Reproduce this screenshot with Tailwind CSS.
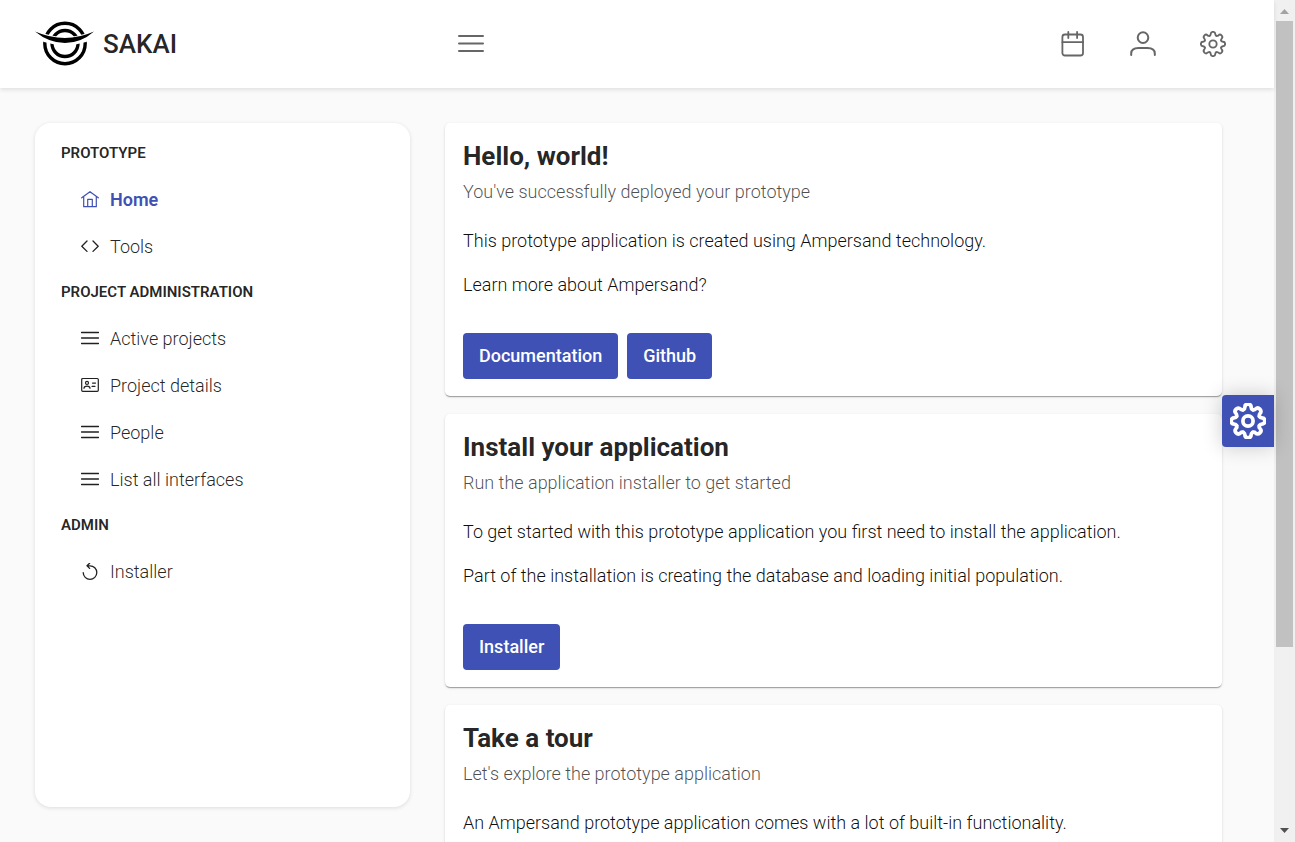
<!DOCTYPE html>
<html lang="en">
<head>
<meta charset="utf-8">
<meta name="viewport" content="width=device-width, initial-scale=1">
<title>Sakai</title>
<script src="https://cdn.jsdelivr.net/npm/@tailwindcss/browser@4"></script>
</head>
<body class="flex h-screen overflow-hidden bg-[#fafafa] font-['Roboto',sans-serif] text-lg text-black/87">
<svg class="hidden" aria-hidden="true">
  <symbol id="bars" viewBox="0 0 18 18"><path d="M.5 2.500h17M.5 8h17M.5 13.500h17" fill="none" stroke="currentColor" stroke-width="1.4" stroke-linecap="round"/></symbol>
  <path id="tooth" d="M-3.14-7.58C-2.2-8-2.1-8.6-2.1-9.2C-2.1-10.5-1.3-11.2 0-11.2C1.3-11.2 2.1-10.5 2.1-9.2C2.1-8.6 2.2-8 3.14-7.58"/>
  <symbol id="cog" viewBox="-12 -12 24 24">
    <g fill="none" stroke="currentColor" stroke-linecap="round">
      <use href="#tooth"/><use href="#tooth" transform="rotate(45)"/><use href="#tooth" transform="rotate(90)"/><use href="#tooth" transform="rotate(135)"/><use href="#tooth" transform="rotate(180)"/><use href="#tooth" transform="rotate(225)"/><use href="#tooth" transform="rotate(270)"/><use href="#tooth" transform="rotate(315)"/>
      <circle r="3.4"/>
    </g>
  </symbol>
</svg>

<div class="relative flex min-w-0 flex-1 flex-col">
  <header class="z-10 flex h-22 shrink-0 items-center bg-white px-[35px] shadow-[0_2px_4px_rgba(0,0,0,0.1)]">
    <a href="#" class="flex w-[410px] items-center gap-[9px] text-[26px] font-medium">
      <svg class="h-[46px] w-[59px]" viewBox="0 0 59 46" aria-hidden="true">
        <g fill="none" stroke="#000" stroke-width="3.4"><circle cx="30" cy="22.500" r="20.200"/><circle cx="30" cy="22.500" r="13"/></g>
        <path d="M3 10Q30 22 57 10L57 18Q52 21 47 22Q30 27 13 22Q8 21 3 18Z" fill="#fff"/>
        <path d="M0 10.500Q30 23.500 59 10.500Q46 22 30 22Q14 22 0 10.500Z" fill="#000"/>
      </svg>
      <span>SAKAI</span>
    </a>
    <button type="button" aria-label="Toggle menu" class="flex size-[52px] items-center justify-center text-[#666]">
      <svg class="size-[26px]" viewBox="0 0 26 26" fill="none" stroke="currentColor" stroke-width="2" stroke-linecap="round" aria-hidden="true"><path d="M1 5h24M1 12.500h24M1 20h24"/></svg>
    </button>
    <nav class="ml-auto flex gap-[18px] text-[#666]" aria-label="Top bar">
      <button type="button" aria-label="Calendar" class="flex size-[52px] items-center justify-center">
        <svg class="size-[26px]" viewBox="0 0 26 26" fill="none" stroke="currentColor" stroke-width="1.800" stroke-linecap="round" aria-hidden="true"><rect x="2.400" y="3.500" width="20.600" height="21" rx="2.500"/><path d="M2.400 11.200h20.600M8.300 1v6M17.100 1v6"/></svg>
      </button>
      <button type="button" aria-label="Profile" class="flex size-[52px] items-center justify-center">
        <svg class="size-[26px]" viewBox="0 0 26 26" fill="none" stroke="currentColor" stroke-width="2" stroke-linecap="round" aria-hidden="true"><circle cx="13" cy="6.600" r="5.300"/><path d="M1.200 24v-1.500C1.200 18 5 17 8.500 17h9c3.500 0 7.300 1 7.300 5.500v1.500"/></svg>
      </button>
      <button type="button" aria-label="Settings" class="flex size-[52px] items-center justify-center">
        <svg class="size-[26px] stroke-[1.700]" aria-hidden="true"><use href="#cog"/></svg>
      </button>
    </nav>
  </header>

  <div class="flex min-h-0 flex-1 gap-[35px] pr-[52px] pl-[35px]">
    <aside class="my-[35px] w-[375px] shrink-0 rounded-[16px] bg-white px-[26px] pt-2 shadow-[0_1px_4px_rgba(0,0,0,0.12)]">
      <nav aria-label="Main menu">
        <h2 class="flex h-[45px] items-center text-[15px] font-semibold">PROTOTYPE</h2>
        <ul>
          <li><a href="#" class="flex h-[47px] items-center gap-[11px] pl-5 font-semibold text-[#3f51b5]">
            <svg class="size-[18px]" viewBox="0 0 18 18" fill="none" stroke="currentColor" stroke-width="1.200" stroke-linecap="round" stroke-linejoin="round" aria-hidden="true"><path d="M.7 6.800L9 .7l8.300 6.100M2.700 5.500v10.200h12.600V5.500M6.700 15.500V8.300h4.600v7.200"/></svg>Home</a></li>
          <li><a href="#" class="flex h-[47px] items-center gap-[11px] pl-5 font-light">
            <svg class="size-[18px]" viewBox="0 0 18 18" fill="none" stroke="currentColor" stroke-width="1.300" stroke-linecap="round" stroke-linejoin="round" aria-hidden="true"><path d="M6 3L.8 8.200 6 13.400M12 3L17.200 8.200 12 13.400"/></svg>Tools</a></li>
        </ul>
        <h2 class="flex h-[45px] items-center text-[15px] font-semibold">PROJECT ADMINISTRATION</h2>
        <ul>
          <li><a href="#" class="flex h-[47px] items-center gap-[11px] pl-5 font-light"><svg class="size-[18px]" aria-hidden="true"><use href="#bars"/></svg>Active projects</a></li>
          <li><a href="#" class="flex h-[47px] items-center gap-[11px] pl-5 font-light">
            <svg class="size-[18px]" viewBox="0 0 18 18" fill="none" stroke="currentColor" stroke-width="1.200" stroke-linecap="round" aria-hidden="true"><rect x=".7" y="1.500" width="16.600" height="12.800" rx="1"/><circle cx="6" cy="5.900" r="1.500"/><path d="M3 11.300c0-2.800 6-2.800 6 0M11.500 6.100h3M11 9.300h3"/></svg>Project details</a></li>
          <li><a href="#" class="flex h-[47px] items-center gap-[11px] pl-5 font-light"><svg class="size-[18px]" aria-hidden="true"><use href="#bars"/></svg>People</a></li>
          <li><a href="#" class="flex h-[47px] items-center gap-[11px] pl-5 font-light"><svg class="size-[18px]" aria-hidden="true"><use href="#bars"/></svg>List all interfaces</a></li>
        </ul>
        <h2 class="flex h-[45px] items-center text-[15px] font-semibold">ADMIN</h2>
        <ul>
          <li><a href="#" class="flex h-[47px] items-center gap-[11px] pl-5 font-light">
            <svg class="size-[18px]" viewBox="0 0 18 18" fill="none" stroke="currentColor" stroke-width="1.300" stroke-linecap="round" stroke-linejoin="round" aria-hidden="true"><path d="M6 2.800H9a6.800 6.800 0 1 1-6.800 6.800M8.600.2L6 2.800l2.600 2.600"/></svg>Installer</a></li>
        </ul>
      </nav>
    </aside>

    <main class="flex min-w-0 flex-1 flex-col gap-[18px] overflow-visible pt-[35px] text-black/95">
      <section class="shrink-0 rounded-[5px] bg-white p-[17px] pl-[18px] shadow-[0_2px_1px_-1px_rgba(0,0,0,0.2),0_1px_1px_rgba(0,0,0,0.14),0_1px_3px_rgba(0,0,0,0.12)]">
        <h1 class="text-[26px] leading-8 font-bold text-black/87">Hello, world!</h1>
        <p class="mt-2 leading-6 font-light text-black/70">You've successfully deployed your prototype</p>
        <p class="mt-[25px] leading-6 font-light">This prototype application is created using Ampersand technology.</p>
        <p class="mt-5 leading-6 font-light">Learn more about Ampersand?</p>
        <div class="mt-9 flex gap-[9px]">
          <button type="button" class="h-[46px] rounded bg-[#3f51b5] px-4 font-medium text-white">Documentation</button>
          <button type="button" class="h-[46px] rounded bg-[#3f51b5] px-4 font-medium text-white">Github</button>
        </div>
      </section>
      <section class="shrink-0 rounded-[5px] bg-white p-[17px] pl-[18px] shadow-[0_2px_1px_-1px_rgba(0,0,0,0.2),0_1px_1px_rgba(0,0,0,0.14),0_1px_3px_rgba(0,0,0,0.12)]">
        <h1 class="text-[26px] leading-8 font-bold text-black/87">Install your application</h1>
        <p class="mt-2 leading-6 font-light text-black/70">Run the application installer to get started</p>
        <p class="mt-[25px] leading-6 font-light">To get started with this prototype application you first need to install the application.</p>
        <p class="mt-5 leading-6 font-light">Part of the installation is creating the database and loading initial population.</p>
        <div class="mt-9 flex gap-[9px]">
          <button type="button" class="h-[46px] rounded bg-[#3f51b5] px-4 font-medium text-white">Installer</button>
        </div>
      </section>
      <section class="shrink-0 rounded-[5px] bg-white p-[17px] pb-10 pl-[18px] shadow-[0_2px_1px_-1px_rgba(0,0,0,0.2),0_1px_1px_rgba(0,0,0,0.14),0_1px_3px_rgba(0,0,0,0.12)]">
        <h1 class="text-[26px] leading-8 font-bold text-black/87">Take a tour</h1>
        <p class="mt-2 leading-6 font-light text-black/70">Let's explore the prototype application</p>
        <p class="mt-[25px] leading-6 font-light">An Ampersand prototype application comes with a lot of built-in functionality.</p>
      </section>
    </main>
  </div>

  <button type="button" aria-label="Theme settings" class="absolute top-1/2 right-0 flex size-[52px] -translate-y-1/2 items-center justify-center rounded-l bg-[#3f51b5] text-white shadow-[0_0_20px_rgba(0,0,0,0.2)]">
    <svg class="size-[36px] stroke-[2.500]" aria-hidden="true"><use href="#cog"/></svg>
  </button>
</div>

<div class="flex w-[21px] shrink-0 flex-col items-center bg-[#f0f0f0]" aria-hidden="true">
  <svg class="h-[21px] w-[21px] shrink-0" viewBox="0 0 21 21"><path d="M6 14l4.500-5 4.500 5z" fill="#a3a3a3"/></svg>
  <div class="min-h-0 flex-1 self-stretch pr-[2px] pl-[2px]"><div class="h-[78.200%] bg-[#c1c1c1]"></div></div>
  <svg class="h-[21px] w-[21px] shrink-0" viewBox="0 0 21 21"><path d="M6 7l4.500 5 4.500-5z" fill="#505050"/></svg>
</div>
</body>
</html>
